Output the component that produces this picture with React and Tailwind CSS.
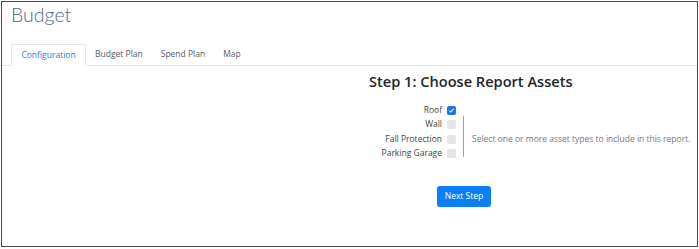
const ASSETS = [
  { label: 'Roof', checked: true },
  { label: 'Wall', checked: false },
  { label: 'Fall Protection', checked: false },
  { label: 'Parking Garage', checked: false },
];

const TABS = ['Configuration', 'Budget Plan', 'Spend Plan', 'Map'];

function Check({ checked }) {
  if (checked) {
    return (
      <span className="flex h-[9px] w-[9px] items-center justify-center rounded-[2px] bg-[#1a73e8]">
        <svg viewBox="0 0 8 8" className="h-[7px] w-[7px]">
          <path d="M1.5 4.2 L3.2 5.8 L6.5 2.2" fill="none" stroke="white" strokeWidth="1.2" />
        </svg>
      </span>
    );
  }
  return <span className="h-[9px] w-[9px] rounded-[2px] bg-[#e3e5e8]" />;
}

export default function App() {
  return (
    <div className="h-[249px] w-[699px] bg-white pl-[1px] pt-[1px] font-['Open_Sans',sans-serif]">
      <div className="h-[246px] w-[697px] border border-[#3e4858]">
        <h1 className="ml-[9px] mt-[0px] font-['Lato',sans-serif] text-[19.5px] font-light leading-[26px] text-[#4d6a8a]">
          Budget
        </h1>

        <div className="mt-[16px] flex border-b border-[#e3e6ea] pl-[9px]">
          {TABS.map((t, i) =>
            i === 0 ? (
              <div
                key={t}
                className="-mb-px flex h-[22px] w-[75px] items-center justify-center border border-b-white border-[#e3e6ea] text-[8.5px] text-[#1f78e0]"
              >
                {t}
              </div>
            ) : (
              <div key={t} className="flex h-[21px] items-center px-[9px] text-[8.5px] text-[#555b62]">
                {t}
              </div>
            )
          )}
        </div>

        <div className="flex flex-col">
          <h2 className="ml-[367px] mt-[5px] text-[14.6px] font-semibold leading-[20px] text-[#212529]">
            Step 1: Choose Report Assets
          </h2>

          <div className="mt-[14px] flex">
            <div className="flex w-[454px] flex-col items-end gap-[4.5px]">
              {ASSETS.map((a) => (
                <div key={a.label} className="flex h-[10px] items-center gap-[5px] text-[8.5px] text-[#3b3f44]">
                  <span>{a.label}</span>
                  <Check checked={a.checked} />
                </div>
              ))}
            </div>
            <div className="ml-[7px] mt-[11px] h-[41px] w-px bg-[#9ea3a8]" />
            <div className="ml-[8px] mt-[29px] whitespace-nowrap text-[8.5px] leading-[10px] text-[#73787d]">
              Select one or more asset types to include in this report.
            </div>
          </div>

          <div className="mt-[27px] flex justify-center pl-[230px]">
            <button className="ml-[-1px] h-[21px] w-[54px] rounded-[3px] bg-[#0b7ff6] text-[8.5px] text-white">
              Next Step
            </button>
          </div>
        </div>
      </div>
    </div>
  );
}
